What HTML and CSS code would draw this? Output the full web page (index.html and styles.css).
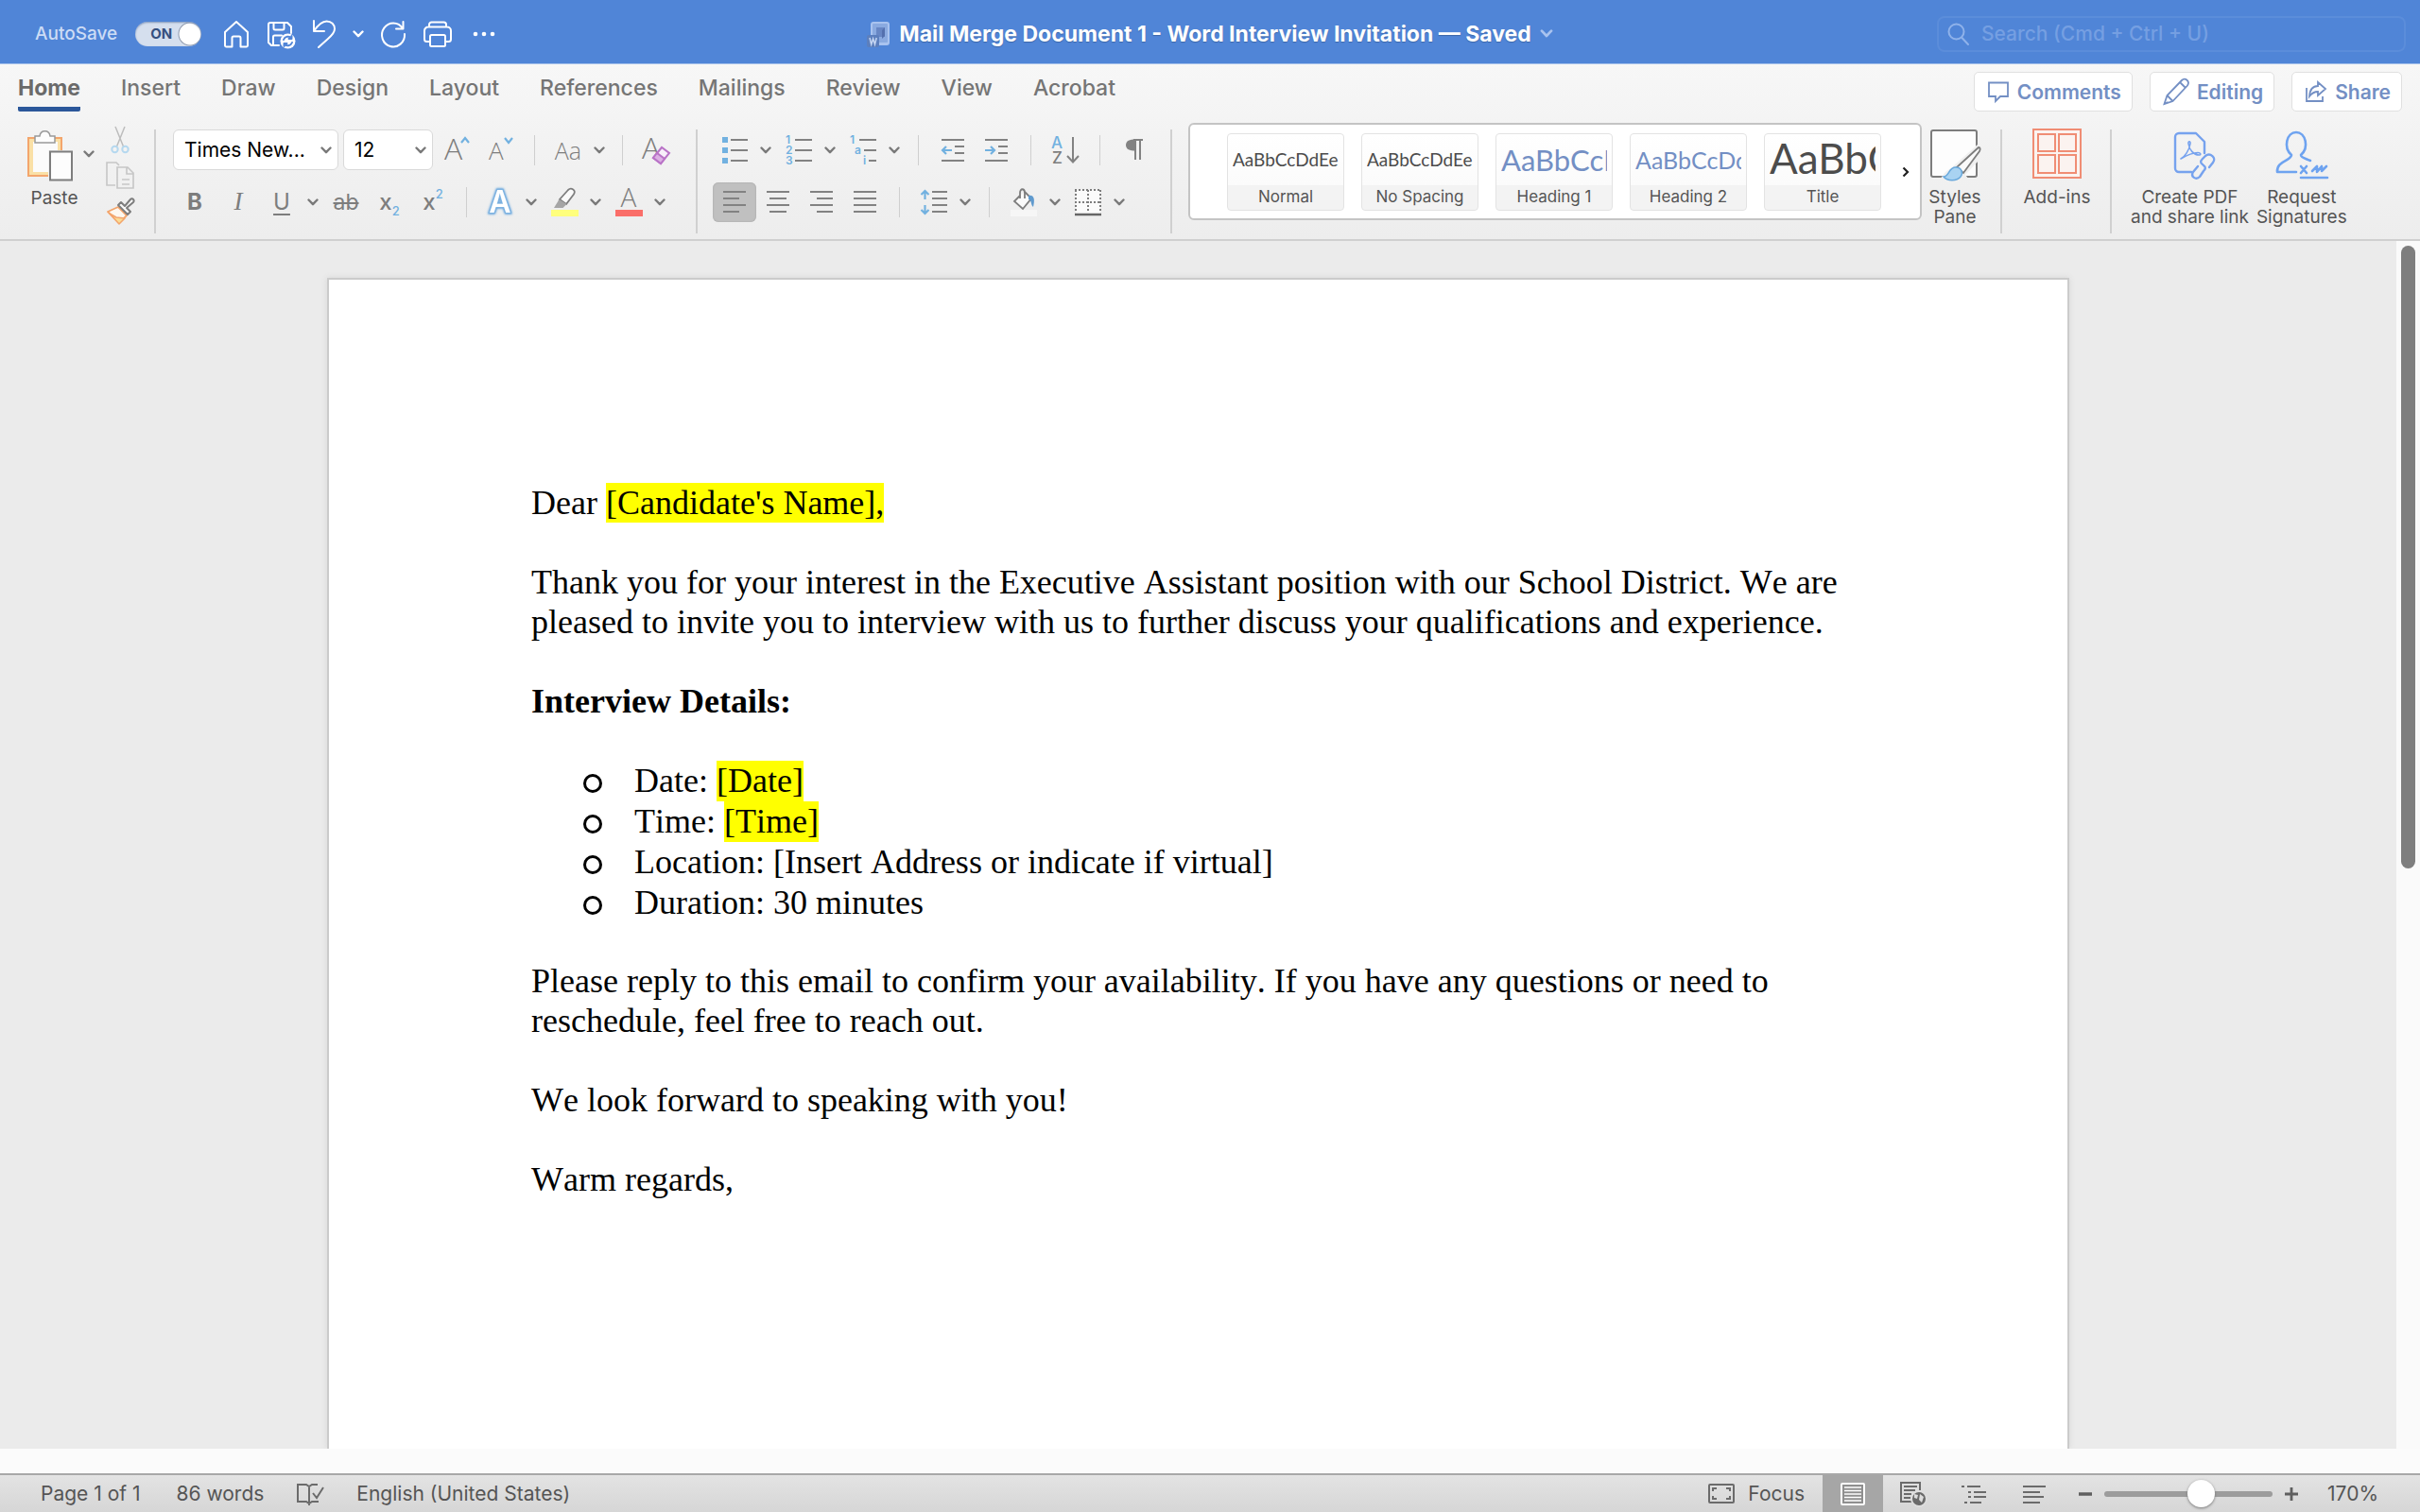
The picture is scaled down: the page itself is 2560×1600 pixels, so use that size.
FILE: index.html
```html
<!DOCTYPE html>
<html lang="en">
<head>
<meta charset="utf-8">
<title>Mail Merge Document 1 - Word Interview Invitation</title>
<link rel="stylesheet" href="styles.css">
</head>
<body>
<svg class="defs" aria-hidden="true">
  <symbol id="chev" viewBox="0 0 12 8"><path d="M1.500 1.500 6 6.200l4.500-4.700" fill="none" stroke="currentColor" stroke-width="2.400" stroke-linecap="round" stroke-linejoin="round"/></symbol>
</svg>

<header class="titlebar">
  <div class="quick">
    <label class="autosave" for="autosave">AutoSave</label>
    <span class="toggle"><input type="checkbox" id="autosave" checked><span class="toggle-text">ON</span></span>
    <button class="qbtn" aria-label="Home"><svg width="30" height="32" viewBox="0 0 30 32" class="line"><path d="M3 14 15 3l12 11v14a1.500 1.500 0 0 1-1.500 1.500H19.500V20a1.500 1.500 0 0 0-1.500-1.500h-6a1.500 1.500 0 0 0-1.500 1.500v9.500H4.500A1.500 1.500 0 0 1 3 28z"/></svg></button>
    <button class="qbtn" aria-label="Save"><svg width="32" height="32" viewBox="0 0 32 32" class="line"><path d="M14 28H6l-3-3V6a2 2 0 0 1 2-2h18l4 4v7M8.500 4v6a1.500 1.500 0 0 0 1.500 1.500h8a1.500 1.500 0 0 0 1.500-1.500V4M8 28v-9a1.500 1.500 0 0 1 1.500-1.500H17"/><circle cx="23.500" cy="23.500" r="8" fill="#fff" stroke="none"/><path d="M19 22a5 5 0 0 1 8.500-1.500V18M28 25a5 5 0 0 1-8.500 1.500V29M27.500 21h-3M19.500 26h3" stroke="#5085d7"/></svg></button>
    <button class="qbtn" aria-label="Undo"><svg width="28" height="32" viewBox="0 0 28 32" class="line"><path d="M3 2v11h11M3 13C7 7 11 2.500 16.500 2.500c5 0 8.500 3.500 8.500 8 0 4-3 7-7 10.500L8 30"/></svg></button>
    <button class="qchev" aria-label="Undo history"><svg width="12" height="8"><use href="#chev"/></svg></button>
    <button class="qbtn" aria-label="Redo"><svg width="30" height="32" viewBox="0 0 30 32" class="line"><path d="M25.500 3v7.500H18M25 10A12 12.500 0 1 0 27 16"/></svg></button>
    <button class="qbtn" aria-label="Print"><svg width="32" height="32" viewBox="0 0 32 32" class="line"><path d="M8 24H4.500A2.500 2.500 0 0 1 2 21.500v-9A4 4 0 0 1 6 8.500h20a4 4 0 0 1 4 4v9a2.500 2.500 0 0 1-2.500 2.500H24M7 8.500V6a2.500 2.500 0 0 1 2.500-2.500h13A2.500 2.500 0 0 1 25 6v2.500M9.500 17h13a1.500 1.500 0 0 1 1.500 1.500v9a1.500 1.500 0 0 1-1.500 1.500h-13A1.500 1.500 0 0 1 8 27.500v-9A1.500 1.500 0 0 1 9.500 17z"/></svg></button>
    <button class="qbtn dots" aria-label="More"><svg width="26" height="8" viewBox="0 0 26 8" fill="currentColor"><circle cx="4" cy="4" r="2.300"/><circle cx="13" cy="4" r="2.300"/><circle cx="22" cy="4" r="2.300"/></svg></button>
  </div>
  <h1 class="doc-title">
    <svg width="25" height="28" viewBox="0 0 25 28"><rect x="4" y="1" width="20" height="25" rx="3" fill="#a9c3ef"/><rect x="6" y="3" width="16" height="20" rx="1" fill="#8aaae0"/><path d="M10 7h9v10H10z" fill="#6786c4"/><path d="M19 7v9l-3 3v-9z" fill="#5470ae"/><rect x="0" y="15" width="13" height="13" rx="2" fill="#5c7fbd"/><path d="m3 18 1.700 7 1.900-6 1.900 6 1.700-7" fill="none" stroke="#c5d6f3" stroke-width="1.500"/></svg>
    <span>Mail Merge Document 1 - Word Interview Invitation — Saved</span>
    <svg class="title-chev" width="14" height="9"><use href="#chev"/></svg>
  </h1>
  <label class="search">
    <svg width="24" height="26" viewBox="0 0 24 26" fill="none" stroke="currentColor" stroke-width="2" stroke-linecap="round"><circle cx="9.500" cy="10.500" r="8"/><path d="m15.500 17 6.500 7"/></svg>
    <input type="search" placeholder="Search (Cmd + Ctrl + U)" aria-label="Search">
  </label>
</header>

<section class="ribbon">
  <div class="tabrow">
    <nav class="tabs">
      <button class="tab active">Home</button><button class="tab">Insert</button><button class="tab">Draw</button><button class="tab">Design</button><button class="tab">Layout</button><button class="tab">References</button><button class="tab">Mailings</button><button class="tab">Review</button><button class="tab">View</button><button class="tab">Acrobat</button>
    </nav>
    <div class="actions">
      <button class="pill"><svg width="24" height="24" viewBox="0 0 24 24" class="icon2"><path d="M2 2.500h20v14.500h-8l-5 5v-5H2z"/></svg>Comments</button>
      <button class="pill"><svg width="28" height="30" viewBox="0 0 28 30" class="icon2"><path d="m1.500 28 3-9L20 3c3.500-3.500 9 1 6 5.500L10.500 25zM18 5l6 6M4.500 19l6 6M1.500 28l4-2"/></svg>Editing</button>
      <button class="pill"><svg width="24" height="24" viewBox="0 0 24 24" class="icon2"><path d="M2 8v14h17v-5M14 2l8 7-8 7v-4c-4 0-6 1-9 5 .500-7 4-11 9-11z"/></svg>Share</button>
    </div>
  </div>

  <div class="groups">
    <div class="group clipboard">
      <button class="paste"><svg width="50" height="56" viewBox="0 0 50 56"><path d="M3 9h35v14h-13v26H3z" fill="#fae0a6" stroke="#f3a56c" stroke-width="2"/><path d="M8 13h26v12H24v20H8z" fill="#fbfbfb"/><path d="M24 22h26v34H24z" fill="#f1f1f1"/><path d="M10 14V7h5c1-7 10-7 11 0h5v7z" fill="#fdfdfd" stroke="#999" stroke-width="1.500"/><path d="M26 23.500h23v30H26z" fill="#fdfdfd" stroke="#7d7d7d" stroke-width="2"/></svg><span>Paste</span></button>
      <button class="chevbtn paste-chev" aria-label="Paste options"><svg width="12" height="8"><use href="#chev"/></svg></button>
      <div class="stack">
        <button class="ic" aria-label="Cut"><svg width="20" height="30" viewBox="0 0 20 30" fill="none" stroke-width="1.500"><path d="M5 1l8.500 21M15 1 6.500 22" stroke="#bdbdbd"/><circle cx="4.500" cy="25" r="3.200" stroke="#b5d8ef" stroke-width="2"/><circle cx="15.500" cy="25" r="3.200" stroke="#b5d8ef" stroke-width="2"/></svg></button>
        <button class="ic" aria-label="Copy"><svg width="30" height="32" viewBox="0 0 30 32" fill="none" stroke="#c6c6c6" stroke-width="1.600"><path d="M10 26H1V2h10l3 3M12 7h11l6 6v16H12zM22 7v7h7M17 20h8M17 25h8"/></svg></button>
        <button class="ic" aria-label="Format Painter"><svg width="30" height="30" viewBox="0 0 30 30"><path d="m2 15 11-5 9 9-8 8z" fill="#fdf8ef" stroke="#f3a56c" stroke-width="1.800" stroke-linejoin="round"/><path d="m4 17 7 4 9 1-6 6z" fill="#fbdc94" stroke="#f3a56c" stroke-width="1.500" stroke-linejoin="round"/><path d="m13 8 3-3 4 4 6-7c2-2 5 1 3 3l-7 6 4 4-3 3z" fill="#f8f8f8" stroke="#7d7d7d" stroke-width="2" stroke-linejoin="round"/></svg></button>
      </div>
    </div>

    <div class="group font">
      <div class="row">
        <span class="combo face"><select aria-label="Font"><option>Times New...</option></select><svg width="12" height="8"><use href="#chev"/></svg></span>
        <span class="combo size"><select aria-label="Font size"><option>12</option></select><svg width="12" height="8"><use href="#chev"/></svg></span>
        <button class="cell" aria-label="Increase font size"><svg width="28" height="32" viewBox="0 0 28 32"><text x="0" y="26" class="g t32">A</text><path d="m18 8 4-5 4 5" class="b"/></svg></button>
        <button class="cell" aria-label="Decrease font size"><svg width="28" height="32" viewBox="0 0 28 32"><text x="1" y="26" class="g t26">A</text><path d="m18 3 4 5 4-5" class="b"/></svg></button>
        <i class="bar"></i>
        <button class="cell" aria-label="Change case"><span class="aa">Aa</span></button><button class="chevbtn" aria-label="Case options"><svg width="12" height="8"><use href="#chev"/></svg></button>
        <i class="bar"></i>
        <button class="cell" aria-label="Clear formatting"><svg width="30" height="34" viewBox="0 0 30 34"><text x="0" y="26" class="g t32">A</text><path d="m12 25 9-11 8 6-9 11z" fill="#f8effa" stroke="#b973c7" stroke-width="2"/><path d="m12 25 4-5 8 6-4 5z" fill="#dcb0e4" stroke="#b973c7" stroke-width="2"/></svg></button>
      </div>
      <div class="row">
        <button class="cell bold">B</button>
        <button class="cell italic">I</button>
        <button class="cell under">U</button><button class="chevbtn" aria-label="Underline options"><svg width="12" height="8"><use href="#chev"/></svg></button>
        <button class="cell strike">ab</button>
        <button class="cell script">x<sub>2</sub></button>
        <button class="cell script">x<sup>2</sup></button>
        <i class="bar"></i>
        <button class="cell" aria-label="Text effects"><svg width="32" height="32" viewBox="0 0 32 32"><text x="16" y="27" text-anchor="middle" class="fx">A</text></svg></button><button class="chevbtn" aria-label="Text effect options"><svg width="12" height="8"><use href="#chev"/></svg></button>
        <button class="cell" aria-label="Highlight"><svg width="30" height="32" viewBox="0 0 30 32"><path d="M10 13 19 3c3-3 9 0 6 4.500L17 18z" fill="#fafafa" stroke="#7d7d7d" stroke-width="1.800"/><path d="m9.500 13 8 5-4 4H4z" fill="#a5a5a5"/><path d="M1 24h29v7H1z" fill="#ffff7d"/></svg></button><button class="chevbtn" aria-label="Highlight options"><svg width="12" height="8"><use href="#chev"/></svg></button>
        <button class="cell" aria-label="Font colour"><svg width="30" height="32" viewBox="0 0 30 32"><text x="15" y="21" text-anchor="middle" class="g t28">A</text><path d="M1 24h29v7H1z" fill="#fa6e69"/></svg></button><button class="chevbtn" aria-label="Font colour options"><svg width="12" height="8"><use href="#chev"/></svg></button>
      </div>
    </div>

    <div class="group para">
      <div class="row">
        <button class="cell" aria-label="Bullets"><svg width="30" height="32" viewBox="0 0 30 32"><path d="M2 2h6v6H2zM2 13h6v6H2zM2 24h6v6H2z" fill="#72b1e0"/><path d="M11 5h18M11 16h18M11 27h18" class="s"/></svg></button><button class="chevbtn" aria-label="Bullet options"><svg width="12" height="8"><use href="#chev"/></svg></button>
        <button class="cell" aria-label="Numbering"><svg width="30" height="32" viewBox="0 0 30 32"><text x="1" y="9" class="n">1</text><text x="1" y="20" class="n">2</text><text x="1" y="31" class="n">3</text><path d="M11 5h18M11 16h18M11 27h18" class="s"/></svg></button><button class="chevbtn" aria-label="Numbering options"><svg width="12" height="8"><use href="#chev"/></svg></button>
        <button class="cell" aria-label="Multilevel list"><svg width="30" height="32" viewBox="0 0 30 32"><text x="1" y="9" class="n">1</text><text x="6" y="20" class="n">a</text><text x="15" y="31" class="n">i</text><path d="M11 5h18M16 16h13M21 27h8" class="s"/></svg></button><button class="chevbtn" aria-label="Multilevel options"><svg width="12" height="8"><use href="#chev"/></svg></button>
        <i class="bar"></i>
        <button class="cell" aria-label="Decrease indent"><svg width="28" height="32" viewBox="0 0 28 32"><path d="M2 5h24M16 12h10M16 19h10M2 27h24" class="s"/><path d="M13 16H3m4-4-4 4 4 4" class="b"/></svg></button>
        <button class="cell" aria-label="Increase indent"><svg width="28" height="32" viewBox="0 0 28 32"><path d="M2 5h24M16 12h10M16 19h10M2 27h24" class="s"/><path d="M2 16h10m-4-4 4 4-4 4" class="b"/></svg></button>
        <i class="bar"></i>
        <button class="cell" aria-label="Sort"><svg width="30" height="34" viewBox="0 0 30 34"><text x="0" y="15" class="az bl">A</text><text x="1" y="31" class="az">Z</text><path d="M23 3v26m-6-6 6 6.500 6-6.500" fill="none" stroke="#828282" stroke-width="2"/></svg></button>
        <i class="bar"></i>
        <button class="cell" aria-label="Show paragraph marks"><svg width="20" height="26" viewBox="0 0 20 26"><path d="M9 2h10M11 2v21M16 2v21" fill="none" stroke="#828282" stroke-width="2"/><path d="M11 1.500v12C5 13.500 1 12 1 7.500s4-6 10-6z" fill="#828282"/></svg></button>
      </div>
      <div class="row">
        <button class="cell on" aria-label="Align left"><svg width="28" height="32" viewBox="0 0 28 32"><path d="M2 5h24M2 12h17M2 19h24M2 26h17" class="s"/></svg></button>
        <button class="cell" aria-label="Align centre"><svg width="28" height="32" viewBox="0 0 28 32"><path d="M2 5h24M5 12h18M2 19h24M5 26h18" class="s"/></svg></button>
        <button class="cell" aria-label="Align right"><svg width="28" height="32" viewBox="0 0 28 32"><path d="M2 5h24M9 12h17M2 19h24M9 26h17" class="s"/></svg></button>
        <button class="cell" aria-label="Justify"><svg width="28" height="32" viewBox="0 0 28 32"><path d="M2 5h24M2 12h24M2 19h24M2 26h24" class="s"/></svg></button>
        <i class="bar"></i>
        <button class="cell" aria-label="Line spacing"><svg width="30" height="32" viewBox="0 0 30 32"><path d="M13 5h16M13 12h16M13 19h16M13 26h16" class="s"/><path d="M5.500 13V4m-4 4 4-4 4 4M5.500 19v9m-4-4 4 4 4-4" class="b"/></svg></button><button class="chevbtn" aria-label="Line spacing options"><svg width="12" height="8"><use href="#chev"/></svg></button>
        <i class="bar"></i>
        <button class="cell" aria-label="Shading"><svg width="30" height="32" viewBox="0 0 30 32"><path d="M1 24h28v7H1z" fill="#f6f6f6"/><path d="M11 9 5 15l9 8 9-11-7-7" fill="#fafafa" stroke="#7d7d7d" stroke-width="1.800"/><path d="M11 12V6c0-5 5-5 5 0v6" fill="none" stroke="#7d7d7d" stroke-width="1.800"/><path d="M20 9c6-1 7 4 5 12-3-2-1-7-5-8z" fill="#5f9ace"/></svg></button><button class="chevbtn" aria-label="Shading options"><svg width="12" height="8"><use href="#chev"/></svg></button>
        <button class="cell" aria-label="Borders"><svg width="30" height="32" viewBox="0 0 30 32"><path d="M2 3h26v25H2z" fill="#fbfbfb"/><path d="M1 3h28M1 16h28M2 3v24M15 3v24M28 3v24" fill="none" stroke="#7d7d7d" stroke-width="2" stroke-dasharray="2 2"/><path d="M1 29h28" stroke="#666" stroke-width="2.500"/></svg></button><button class="chevbtn" aria-label="Border options"><svg width="12" height="8"><use href="#chev"/></svg></button>
      </div>
    </div>

    <div class="group styles">
      <div class="gallery">
        <button class="style"><span class="sample s1">AaBbCcDdEe</span><span class="name">Normal</span></button>
        <button class="style"><span class="sample s1">AaBbCcDdEe</span><span class="name">No Spacing</span></button>
        <button class="style"><span class="sample s2">AaBbCcD</span><span class="name">Heading 1</span></button>
        <button class="style"><span class="sample s3">AaBbCcDd</span><span class="name">Heading 2</span></button>
        <button class="style"><span class="sample s4">AaBbC</span><span class="name">Title</span></button>
        <button class="more" aria-label="More styles"><svg width="8" height="12" viewBox="0 0 8 12"><path d="m1.500 1.500 4.500 4.500-4.500 4.500" fill="none" stroke="#222" stroke-width="2.200"/></svg></button>
      </div>
      <button class="big pane"><svg width="56" height="56" viewBox="0 0 56 56"><rect x="3" y="3" width="48" height="49" rx="2" fill="#fdfdfd" stroke="#7d7d7d" stroke-width="2"/><path d="M52 18c4 2 4 5 1 17L39 50l4 5H12l6-8 7-5z" fill="#f0f0f0"/><path d="M53 21c2 0 2 2 1 4L37 48l-7-6z" fill="#fafafa" stroke="#7d7d7d" stroke-width="1.800"/><path d="M16 52c6 0 5-10 13-10 6 0 8 6 5 10-4 5-14 5-18 0z" fill="#a9d3f2" stroke="#6aa9dc" stroke-width="1.500"/></svg><span>Styles<br>Pane</span></button>
    </div>

    <div class="group addins">
      <button class="big"><svg width="56" height="56" viewBox="0 0 56 56" fill="none" stroke="#f08d74" stroke-width="2"><path d="M3 2h50v51H3zM8 7h18v18H8zM30 7h18v18H30zM8 29h18v19H8zM30 29h18v19H30z" fill="#fbf3f0"/></svg><span>Add-ins</span></button>
    </div>

    <div class="group acrobat">
      <button class="big"><svg width="56" height="56" viewBox="0 0 56 56" fill="none" stroke="#76a2ee" stroke-width="2.400" stroke-linecap="round" stroke-linejoin="round"><path d="M30 47H17a4 4 0 0 1-4-4V10a4 4 0 0 1 4-4h18l9 9v12"/><path d="M19 33c4-2 9-9 10-16 .500-3-2.500-3-2 0 1 7 6 12 11 12 3 0 2-2.500-1-2.500-6 0-12 3-18 6.500z" stroke-width="1.600"/><path d="M42 39c-3-2-2-4 0-6l3-3c5-4 12 2 8 7l-4 5M43 40c3 2 2 4 0 6l-4 6c-4 4-10 0-7-5l5-6"/></svg><span>Create PDF<br>and share link</span></button>
      <button class="big"><svg width="56" height="56" viewBox="0 0 56 56" fill="none" stroke="#6ea3f0" stroke-width="2.600" stroke-linecap="round" stroke-linejoin="round"><path d="M22 47H2c-1-12 14-11 15-18-9-8-5-24 5-24s14 16 5 24c0 3 6 4 10 6M27 53h28M27 41l6 7M33 41l-6 7M39 46l5-5v6l5-6v5l5-5"/></svg><span>Request<br>Signatures</span></button>
    </div>
  </div>
</section>

<main class="workspace">
  <div class="canvas">
    <article class="page">
      <p>Dear <mark>[Candidate's Name],</mark></p>
      <p>Thank you for your interest in the Executive Assistant position with our School District. We are pleased to invite you to interview with us to further discuss your qualifications and experience.</p>
      <h2>Interview Details:</h2>
      <ul>
        <li>Date: <mark>[Date]</mark></li>
        <li>Time: <mark>[Time]</mark></li>
        <li>Location: [Insert Address or indicate if virtual]</li>
        <li>Duration: 30 minutes</li>
      </ul>
      <p>Please reply to this email to confirm your availability. If you have any questions or need to reschedule, feel free to reach out.</p>
      <p>We look forward to speaking with you!</p>
      <p>Warm regards,</p>
    </article>
  </div>
  <div class="scroll"><div class="thumb"></div></div>
</main>

<footer class="status">
  <span class="pages">Page 1 of 1</span>
  <span class="words">86 words</span>
  <button class="sbtn proof" aria-label="Proofing"><svg width="30" height="26" viewBox="0 0 30 26" fill="none" stroke="#6b6b6b" stroke-width="2"><path d="M23 3h-6l-3 2-3-2H2v18h9l3 2 3-2h7M14 5v20M18 12l4 5 7-11"/></svg></button>
  <span class="lang">English (United States)</span>
  <button class="sbtn focus"><svg width="28" height="22" viewBox="0 0 28 22" fill="none" stroke="#6b6b6b" stroke-width="2"><rect x="1" y="1" width="26" height="19" rx="1"/><path d="M5 8V5h4M19 5h4v3M23 13v3h-4M9 16H5v-3"/></svg>Focus</button>
  <button class="view sel" aria-label="Print layout"><svg width="26" height="26" viewBox="0 0 26 26"><rect x="1" y="2" width="24" height="22" rx="1" fill="#8f8f8f" stroke="#fff" stroke-width="2"/><path d="M4 6h18M4 9.500h18M4 13h18M4 16.500h18M4 20h18" stroke="#fff" stroke-width="1.500"/></svg></button>
  <button class="view" aria-label="Web layout"><svg width="30" height="28" viewBox="0 0 30 28" fill="none" stroke="#6b6b6b" stroke-width="2"><path d="M13 22H2V2h20v8M5 6h14M5 10h12M5 14h8M5 18h7"/><circle cx="21" cy="19" r="8" fill="#6b6b6b" stroke="#dedede"/><path d="m16 14 4 1-1 4-3-1zM22 14l4 3-2 6-3-3z" fill="#ddd" stroke="none"/></svg></button>
  <button class="view" aria-label="Outline"><svg width="28" height="24" viewBox="0 0 28 24" stroke="#6b6b6b" stroke-width="2"><path d="M1 4h3M7 4h14M8 10h3M14 10h13M8 15h3M14 15h13M4 21h3M10 21h12"/></svg></button>
  <button class="view" aria-label="Draft"><svg width="28" height="24" viewBox="0 0 28 24" stroke="#6b6b6b" stroke-width="2"><path d="M2 4h24M2 10h18M2 15h22M2 21h18"/></svg></button>
  <div class="zoom">
    <button class="sbtn" aria-label="Zoom out"><svg width="16" height="16" viewBox="0 0 16 16"><path d="M1 8h14" stroke="#5f5f5f" stroke-width="3.500"/></svg></button>
    <input type="range" min="0" max="100" value="59" aria-label="Zoom">
    <button class="sbtn" aria-label="Zoom in"><svg width="16" height="16" viewBox="0 0 16 16"><path d="M1 8h14M8 1v14" stroke="#5f5f5f" stroke-width="2.800"/></svg></button>
  </div>
  <span class="pct">170%</span>
</footer>
</body>
</html>
```
FILE: styles.css
```css
*, *::before { box-sizing: border-box; }
html, body { height: 100%; }
body {
  margin: 0;
  display: flex;
  flex-direction: column;
  overflow: hidden;
  font-family: Inter, "Liberation Sans", sans-serif;
  font-size: 20px;
  color: #555;
  background: #ebebeb;
}
button, input, select { font: inherit; color: inherit; }
button { border: 0; padding: 0; background: none; display: flex; align-items: center; justify-content: center; }
svg { display: block; flex: none; overflow: visible; }
.defs { position: absolute; width: 0; height: 0; }

/* Title bar */
.titlebar {
  display: grid;
  grid-template-columns: 1fr auto 1fr;
  align-items: center;
  height: 68px;
  padding: 4px 15px 0;
  background: #5085d7;
  border-bottom: 1px solid #a3bfea;
  color: #fff;
}
.quick { display: flex; align-items: center; gap: 16px; padding-left: 22px; }
.autosave { color: #ccdcf5; font-size: 19px; font-weight: 500; }
.toggle { display: grid; align-items: center; width: 70px; height: 26px; margin: 0 6px 0 3px; }
.toggle > * { grid-area: 1 / 1; }
.toggle input {
  appearance: none;
  width: 70px;
  height: 26px;
  margin: 0;
  border-radius: 13px;
  background: radial-gradient(circle at 58px 13px, #fff 11px, #8e99ad 12px, transparent 13px), #d5dfee;
  box-shadow: inset 0 1px 2px #7f94b8;
}
.toggle-text { padding-left: 16px; font-size: 15px; font-weight: 700; color: #35507f; pointer-events: none; }
.line { fill: none; stroke: #fff; stroke-width: 2; stroke-linecap: round; stroke-linejoin: round; }
.dots { padding-left: 4px; }
.doc-title { display: flex; align-items: center; gap: 9px; margin: 0; font-size: 23px; font-weight: 700; text-shadow: 0 1px 1px #3c66a8; white-space: nowrap; }
.title-chev { color: #a9c3ef; }
.search {
  justify-self: end;
  display: flex;
  align-items: center;
  gap: 12px;
  width: 496px;
  height: 38px;
  padding-left: 9px;
  border: 2px solid #5b8dda;
  border-radius: 8px;
  color: #8fb2ea;
}
.search input { flex: 1; min-width: 0; border: 0; background: none; outline: 0; font-size: 21px; font-weight: 500; padding: 0; }
.search input::placeholder { color: #759fe2; }

/* Ribbon */
.ribbon { background: linear-gradient(#f7f7f7, #ededed); border-bottom: 2px solid #cfcfcf; }
.tabrow { display: flex; justify-content: space-between; align-items: start; height: 62px; padding: 8px 19px 0; }
.tabs { display: flex; gap: 43px; }
.tab { height: 42px; padding-bottom: 4px; font-size: 23px; font-weight: 500; color: #757575; border-bottom: 5px solid transparent; }
.tab.active { font-weight: 700; color: #6a6a6a; border-color: #2b579a; border-radius: 2px; }
.actions { display: flex; gap: 18px; }
.pill { height: 42px; padding: 0 11px 0 13px; gap: 8px; background: #fff; border: 1px solid #e0e0e0; border-radius: 5px; color: #738fc4; font-size: 21px; font-weight: 600; }
.icon2 { fill: none; stroke: #738fc4; stroke-width: 1.800; }
.groups { display: flex; height: 123px; }
.group { display: flex; padding-top: 7px; }
.clipboard, .font, .para, .styles, .addins { background: linear-gradient(#d0d0d0, #d0d0d0) right 7px / 2px 110px no-repeat; }
.clipboard { width: 165px; padding-left: 27px; align-items: start; }
.paste { flex-direction: column; gap: 5px; width: 61px; font-size: 19px; }
.paste svg { align-self: start; }
.chevbtn { width: 22px; height: 36px; justify-content: start; padding-left: 4px; color: #7a7a7a; }
.paste-chev { padding-left: 0; margin-top: 8px; }
.stack { display: flex; flex-direction: column; width: 34px; gap: 6px; margin-top: -5px; }
.stack .ic { height: 32px; }
.font, .para { flex-direction: column; gap: 12px; }
.font { width: 573px; padding-left: 18px; }
.para { width: 502px; padding-left: 16px; }
.row { display: flex; align-items: center; height: 43px; }
.combo { display: grid; align-items: center; height: 43px; background: #fff; border: 1px solid #d9d9d9; border-radius: 6px; color: #7a7a7a; }
.combo > * { grid-area: 1 / 1; }
.combo svg { justify-self: end; margin-right: 6px; pointer-events: none; }
.combo select { appearance: none; width: 100%; height: 41px; border: 0; padding: 0 11px; background: none; color: #000; font-size: 21px; }
.face { width: 175px; margin-right: 5px; }
.size { width: 95px; margin-right: 3px; }
.cell { width: 46px; height: 42px; flex: none; color: #7d7d7d; font-size: 24px; }
.cell.on { background: #c0c0c0; border-radius: 6px; box-shadow: inset 0 0 2px #a0a0a0; }
.bar { width: 1px; height: 32px; margin: 0 12px; background: #cfcfcf; }
.para .bar { margin: 0 13px; }
.g { fill: #7d7d7d; font-family: "Open Sans"; font-weight: 300; }
.t32 { font-size: 32px; } .t28 { font-size: 28px; } .t26 { font-size: 26px; }
.b { fill: none; stroke: #72b1e0; stroke-width: 2.200; }
.s { stroke: #828282; stroke-width: 2; }
.n { fill: #72b1e0; font-size: 12px; font-weight: 600; }
.az { fill: #7d7d7d; font-size: 17px; font-weight: 500; }
.az.bl { fill: #72b1e0; }
.aa { font-family: "Open Sans"; font-size: 25px; font-weight: 300; }
.bold { font-weight: 700; }
.italic { font-family: "Liberation Serif", serif; font-style: italic; font-size: 27px; }
.under { text-decoration: underline; text-decoration-thickness: 2px; text-underline-offset: 4px; }
.strike { text-decoration: line-through; text-decoration-thickness: 2px; font-size: 23px; }
.script { font-weight: 500; }
.script sub, .script sup { font-size: 13px; color: #72b1e0; line-height: 0; }
.script sub { align-self: end; padding-bottom: 12px; }
.script sup { align-self: start; padding-top: 12px; }
.fx { font-size: 32px; font-weight: 600; fill: #fff; stroke: #7db3e2; stroke-width: 2.500; paint-order: stroke; filter: drop-shadow(0 0 1px #5b95cf) drop-shadow(0 0 1px #a7d0f0); }
.styles { flex: 1; min-width: 0; padding: 0 20px 0 17px; gap: 5px; }
.gallery { flex: 1; min-width: 0; display: flex; justify-content: start; gap: 18px; height: 103px; padding: 9px 8px 8px 39px; background: #fff; border: 2px solid #c4c4c4; border-radius: 6px; }
.style { width: 124px; height: 82px; flex: none; flex-direction: column; align-items: stretch; justify-content: start; border: 1px solid #e3e3e3; border-radius: 4px; background: linear-gradient(#fff, #fbfbfb 54px, #f3f3f3 54px); font-size: 17px; }
.sample { height: 54px; line-height: 54px; margin: 0 5px; overflow: hidden; white-space: nowrap; text-align: left; font-family: Lato, sans-serif; color: #4c4c4c; }
.name { line-height: 25px; }
.s1 { font-size: 19px; }
.s2 { font-size: 31px; color: #738fc4; }
.s3 { font-size: 25px; color: #738fc4; }
.s4 { font-size: 44px; line-height: 50px; }
.more { flex: 1; }
.big { flex-direction: column; justify-content: start; gap: 7px; font-size: 19px; line-height: 21px; }
.pane { width: 60px; padding-top: 5px; }
.addins { width: 116px; justify-content: center; padding-top: 5px; }
.acrobat { width: 326px; padding: 5px 0 0 20px; gap: 8px; }

/* Document */
.workspace { flex: 1; min-height: 0; display: flex; border-bottom: 26px solid #fbfbfb; }
.canvas { flex: 1; overflow: hidden; display: flex; justify-content: center; padding: 39px 0 0; }
.page {
  width: 73%;
  max-width: 1843px;
  padding: 215px 214px;
  background: #fff;
  border: 2px solid #cbcbcb;
  border-bottom: 0;
  box-shadow: 0 0 6px #d5d5d5;
  font-family: "Liberation Serif", serif;
  font-size: 36px;
  font-kerning: none;
  line-height: 42px;
  color: #000;
}
.page p, .page h2 { margin: 0 0 42px; font-size: 36px; }
.page mark { display: inline-block; background: #ff0; color: inherit; }
.page ul { margin: 0 0 40px; padding: 0; list-style: none; line-height: 43px; }
.page li { display: flex; align-items: center; white-space: pre; }
.page li::before { content: ""; width: 20px; height: 20px; margin: 5px 34px 0 55px; border: 3px solid #000; border-radius: 50%; }
.scroll { width: 25px; padding: 5px; background: #fafafa; }
.thumb { height: 52%; width: 15px; border-radius: 8px; background: #7e7e7e; }

/* Status bar */
.status { display: flex; align-items: center; height: 41px; padding: 0 44px 0 43px; border-top: 2px solid #a8a8a8; background: linear-gradient(#e3e3e3, #d6d6d6); font-size: 21px; }
.words { margin-left: 38px; }
.proof { margin: 0 34px; }
.focus { gap: 14px; margin-left: auto; margin-right: 19px; }
.view { width: 64px; height: 39px; }
.view.sel { background: #a6a6a6; }
.zoom { display: flex; align-items: center; gap: 12px; margin: 0 30px 0 14px; }
.zoom input { appearance: none; width: 178px; height: 30px; margin: 0; background: none; }
.zoom input::-webkit-slider-runnable-track { height: 6px; border-radius: 3px; background: #9c9c9c; }
.zoom input::-webkit-slider-thumb { appearance: none; width: 29px; height: 29px; margin-top: -12px; border-radius: 50%; background: #fff; box-shadow: 0 1px 3px #777; }
```
